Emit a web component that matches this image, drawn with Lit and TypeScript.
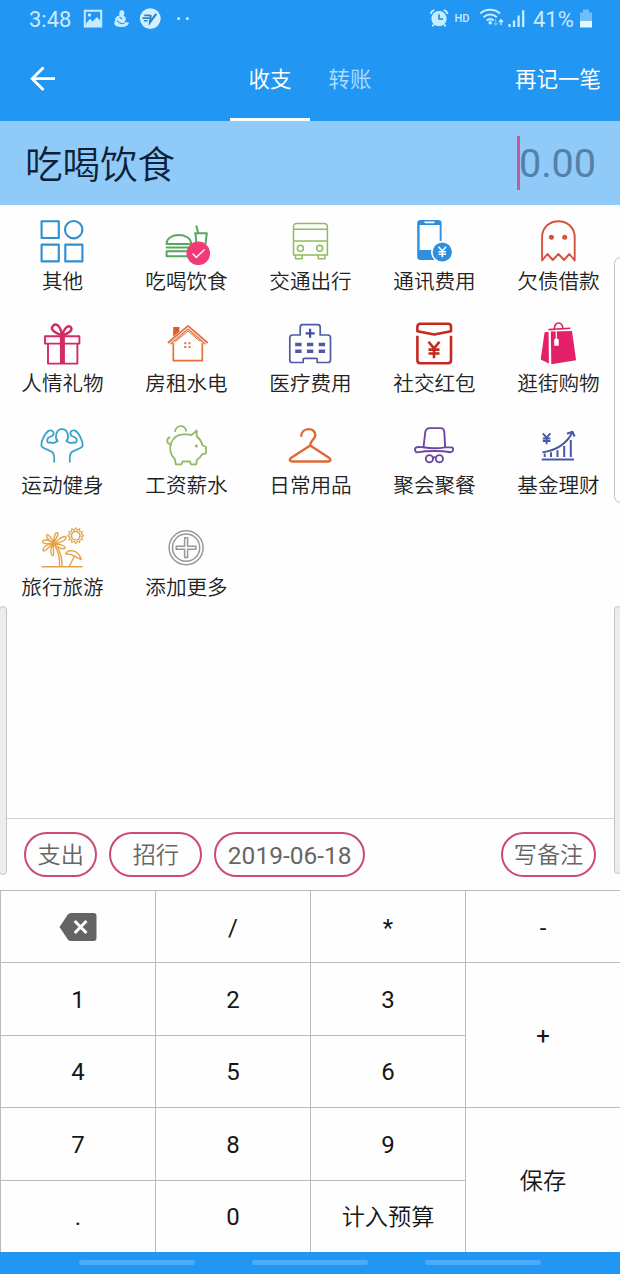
import { LitElement, html, svg, css } from "lit";
import { customElement, property, state } from "lit/decorators.js";
import { classMap } from "lit/directives/class-map.js";

const yen = (x: number, y: number, w: number, h: number) => {
  const a = w / 2;
  const b = h / 2;
  return `M${x - a} ${y - b}L${x} ${y - b * 0.2}L${x + a} ${y - b}M${x} ${y - b * 0.2}V${y + b}M${x - a} ${y - b * 0.05}H${x + a}M${x - a} ${y + b * 0.42}H${x + a}`;
};

const sun = (x: number, y: number, outer: number, inner: number, rays: number) =>
  Array.from({ length: rays * 2 }, (_, i) => {
    const r = i % 2 ? inner : outer;
    const t = (i * Math.PI) / rays;
    return `${(x + r * Math.sin(t)).toFixed(2)},${(y - r * Math.cos(t)).toFixed(2)}`;
  }).join(" ");

const ICONS: Record<string, unknown> = {
  other: svg`<g stroke="#2f8fd0" stroke-width="2.1"><path d="M3.6 4.3H20.8V21H3.6zM3.6 27.6H20.8V44.4H3.6zM27.3 27.6H44.4V44.4H27.3z"/><circle cx="35.7" cy="12.7" r="8.7"/></g>`,
  food: svg`<g stroke="#56a85f" stroke-width="2"><path d="M4.6 27C4.6 15 29 15 29.2 27zM3.8 30.4H31M4.6 34.2H26V39.2H4.6z"/><path d="M32.2 16.3H44.8L43.5 27M33.5 16.3L34.4 26M36.2 16L34.2 8.4"/></g><circle cx="36.3" cy="36.3" r="11.8" fill="#f23a78"/><path d="M30.6 36.6L34.3 40.4L42.6 32.4" stroke="#fff" stroke-width="1.4"/>`,
  bus: svg`<g stroke="#8fbd5b" stroke-width="1.5"><path d="M11 6.5H38Q41.4 6.5 41.4 10V38H7.5V10Q7.5 6.5 11 6.5zM7.5 12.3H41.4M7.5 24H41.4M9.5 38V41.8H16.2V38M32.3 38V41.8H39V38"/><circle cx="14.4" cy="31.3" r="3"/><circle cx="33.7" cy="31.3" r="3"/></g>`,
  phone: svg`<path fill="#2f8fdd" fill-rule="evenodd" d="M10.5 3H28.5Q31.6 3 31.6 6V43H10.5Q7.2 43 7.2 40V6Q7.2 3 10.5 3zM9.6 8V33H29.7V8zM14 4.4L15 6.2H24L25 4.4z"/><circle cx="32.3" cy="35" r="11.2" fill="#fff"/><circle cx="32.3" cy="35" r="9.6" fill="#2f8fdd"/><path d="${yen(32.3, 35, 7.5, 10.5)}" stroke="#fff" stroke-width="1.6"/>`,
  ghost: svg`<path d="M8.1 43.5V20.4C8.1-1.2 40.7-1.2 40.7 20.4V43.5L35.3 37L30 43L24.4 37L18.8 43L13.5 37z" stroke="#d4503f" stroke-width="1.9"/><circle cx="17.4" cy="20.3" r="2.5" fill="#d4503f"/><circle cx="30.7" cy="20.3" r="2.5" fill="#d4503f"/>`,
  gift: svg`<g stroke="#d42a63" stroke-width="1.9"><path d="M7 17.2H41.4V24.6H7zM10 24.6H39.4V44.6H10z"/><path stroke-width="2.4" d="M24 16.5C15 13 12.5 10 14.5 7.5C17.5 3 22.5 6 24 16.5C27 7 31 6 33 8.3C35 11.5 30 15 24 16.5"/><path stroke-width="5" d="M24.4 14.5V45"/></g>`,
  house: svg`<path d="M11.2 17.8V8H17.4V12.5z" fill="#e65a22"/><path d="M5.8 24L26 6.8L45.8 24" stroke="#e2703f" stroke-width="1.7"/><path d="M8.2 25.2L26 10L43.5 25.2" stroke="#e2703f" stroke-width="1.2"/><path d="M11.3 24V41.6H40.3V24" stroke="#e2703f" stroke-width="1.7"/><path d="M13.2 22.8L26 12.1L38.5 22.8" stroke="#e2703f" stroke-width="1"/><path d="M22.3 23.2h2v2h-2zM26.5 23.2h2v2h-2zM22.3 27h2v2h-2zM26.5 27h2v2h-2z" fill="#d4714a"/>`,
  hospital: svg`<path d="M14.2 16V8.2Q14.2 5.6 16.8 5.6H31.5Q34.2 5.6 34.2 8.2V16H41.8Q44.5 16 44.5 18.7V41Q44.5 43.5 42 43.5H31.2V40Q31 39.3 30 39.3H18.2Q17.2 39.3 17.2 40V43.5H6.3Q3.8 43.5 3.8 41V18.7Q3.8 16 6.5 16z" stroke="#4f5aa5" stroke-width="1.7"/><path d="M24.1 9.7V18.8M19.6 14.3H28.7" stroke="#3f4ca0" stroke-width="2.2"/><path d="M9.2 23.7h6.4v3.6h-6.4zM20.9 23.7h6.4v3.6h-6.4zM32.7 23.7h6.4v3.6h-6.4zM9.2 30.4h6.4v3.6h-6.4zM20.9 30.4h6.4v3.6h-6.4zM32.7 30.4h6.4v3.6h-6.4z" fill="#4f5aa5"/>`,
  packet: svg`<g stroke="#c4281f" stroke-width="2.6"><path d="M7.4 12.2V7.8Q7.4 4.8 10.4 4.8H38Q41 4.8 41 7.8V12.2L24.2 15.6z"/><path d="M7.4 16.8V41.2Q7.4 44.2 10.4 44.2H38Q41 44.2 41 41.2V16.8"/><path d="${yen(24, 31, 11, 16.5)}"/></g>`,
  bag: svg`<path d="M20.4 10.2C20.5 2 28.5 2 28.8 9.8M14.6 10.6L36.3 9.2" stroke="#d8215f" stroke-width="1.6"/><path d="M10.6 13.2L14.6 12.8L14.9 44.6L6.7 40.5zM16.8 12.6L38 11.9L42.1 41.3L17.3 45.2z" fill="#e5206b"/><path d="M22.3 10.4V20" stroke="#fff" stroke-width="1.2"/><path d="M20.2 20.4L22.3 18.9L24.7 20.4V26.8H20.2z" fill="#fff"/>`,
  muscle: svg`<g stroke="#3aa3cc" stroke-width="1.8"><path d="M20.2 20.8C16.4 17.5 17.6 8.1 24 8.1C30.4 8.1 31.6 17.5 27.8 20.8"/><path d="M18.5 17.8C20.5 22 14 22.5 12 21.2C9.5 23 8.5 19.5 10 17L14.5 14.7C17 11.5 15 8.8 11 9.6C6 12.5 2.3 22.5 3.7 25.6C7.5 29 13.5 29 15.2 32.2C16.8 36 16.2 38 16.2 41.5"/><path d="M29.5 17.8C27.5 22 34 22.5 36 21.2C38.5 23 39.5 19.5 38 17L33.5 14.7C31 11.5 33 8.8 37 9.6C42 12.5 45.7 22.5 44.3 25.6C40.5 29 34.5 29 32.8 32.2C31.2 36 31.8 38 31.8 41.5"/></g>`,
  pig: svg`<g stroke="#94b865" stroke-width="1.8"><path d="M29.5 14.2L34.7 9.5V15.3C38 18 39.5 20.5 40.5 24.3L44 26V32.3L40.2 33.2Q38.5 36.5 35 38.7L34.2 43.3H28.8L28 40.5H20.5L19.5 43.3H13.8L12.8 38C8.2 34 7 27 9.3 21.5C12 15 18 12.8 24 13.4Q27.5 13.2 29.5 14.2z"/><path d="M13 11C13.5 3.3 24 3.2 24.2 10.4M8.3 16.3C4.4 16.5 4 22.5 8.3 23.4"/></g><circle cx="34.4" cy="25" r="1.5" fill="#94b865"/>`,
  hanger: svg`<path d="M15.2 15.8C15 5.8 29.5 5.8 29.3 14.3C29 19 24 19 24.2 24.5L5.3 36.8C2.6 39 4.2 40.5 6.5 40.5H42C44.5 40.5 45.7 38.5 43 36.7L24.2 24.5" stroke="#df6836" stroke-width="2.4"/>`,
  hat: svg`<g stroke="#6a48a3" stroke-width="1.9"><path d="M13.4 27L15.3 11Q15.9 7.1 20 7.1H30.5Q34.2 7.1 34.3 11L35.2 27"/><path d="M13.2 26.2C10 26.2 7 25.5 5.6 26.8C4.3 28.5 5 31 7.5 31.4C17 29.5 32 29.5 40.5 31.3C43.5 31 44 27.5 42 26.4H35.2Q24 28.2 13.2 26.2z"/><circle cx="19.4" cy="37.7" r="3.6"/><circle cx="29.4" cy="37.7" r="3.6"/><path d="M22.8 36.8Q24.4 35.5 26 36.8"/></g>`,
  fund: svg`<g stroke="#4659a5"><path stroke-width="1.9" d="M7.7 38.5H40M8.3 31.4C21 29.5 32 24 38.3 11.5"/><path stroke-width="2.1" d="M33 12.8L38.4 10.8L40.6 15.5"/><path stroke-width="2" d="M10.7 32.6V36M17 31.3V36M23.5 29.3V36M30.2 25V36M36.8 19V36"/><path stroke-width="1.9" d="${yen(12.6, 17.8, 7.6, 10.8)}"/></g>`,
  travel: svg`<g stroke="#e3a447" stroke-width="1.4"><circle cx="37.7" cy="12.7" r="4.2"/><polygon points="${sun(37.7, 12.7, 8, 5.7, 12)}" stroke-width="1.1"/><path d="M3.7 43.7H44.5M17 23C20.5 29 22 36 21.5 43.5M19 23C22.8 30 24.4 37 24 43.5"/><path d="M16 21C10 15 4 17 4.5 19C6 22 12 20 16 21C9 20 4 25 5.5 28C8 29 11 22 16 21C11 25 13 33 15 32.5C17 31 14 25 16 21C18 24 25 27 27 25C27 22 20 21 16 21C22 20 29 17 28 14C25 12 20 17 16 21C16 16 22 12 19.5 9.7C16.5 9 15.5 16 16 21C15 17 10 10 8.5 12C7.5 15 12 18 16 21"/><path d="M27.5 31C30 26 40 26 43.3 36.5L36.5 33.3L33 31.4L27.5 31M36.8 32.2L31.2 43.5"/></g><circle cx="16" cy="21" r="2.3" fill="#eba034"/>`,
  add: svg`<g stroke="#98989b" stroke-width="1.5"><circle cx="24.1" cy="24.7" r="17"/><circle cx="24.1" cy="24.7" r="13.6"/><path d="M22.6 14.8H25.6V23.2H34V26.2H25.6V34.6H22.6V26.2H14.2V23.2H22.6z"/></g>`,
};

const CATEGORIES = [
  ["other", "其他"], ["food", "吃喝饮食"], ["bus", "交通出行"], ["phone", "通讯费用"], ["ghost", "欠债借款"],
  ["gift", "人情礼物"], ["house", "房租水电"], ["hospital", "医疗费用"], ["packet", "社交红包"], ["bag", "逛街购物"],
  ["muscle", "运动健身"], ["pig", "工资薪水"], ["hanger", "日常用品"], ["hat", "聚会聚餐"], ["fund", "基金理财"],
  ["travel", "旅行旅游"], ["add", "添加更多"],
];

const KEYS = ["del", "/", "*", "-", "1", "2", "3", "+", "4", "5", "6", "7", "8", "9", "保存", ".", "0", "计入预算"];

@customElement("status-bar")
class StatusBar extends LitElement {
  static styles = css`
    :host { display: flex; height: 38px; padding: 0 27px 0 29px; justify-content: space-between; color: #cdeaff; font: 22px/38px Roboto, sans-serif; }
    .side { display: flex; align-items: center; }
    .time { width: 53px; padding-top: 2px; }
    .percent { width: 47px; padding-top: 2px; }
    svg { display: block; fill: none; }
  `;
  render() {
    return html`
      <div class="side">
        <span class="time">3:48</span>
        <svg width="112" height="38" viewBox="82 0 112 38">
          <path d="M84.8 10.8H101.2V26.6H84.8z" stroke="#c6edff" stroke-width="2"/>
          <path d="M86 23.5L90 18.7L92.5 21.5L97 17L100.5 21V26H86z" fill="#c6edff"/><circle cx="89.5" cy="15" r="1.7" fill="#c6edff"/>
          <path d="M119.6 15.5C118.6 12.5 120 9.8 122.4 10.3C125 11 124.6 14 123.6 15.8C127 17.5 126 20.5 124.5 22L128.9 22.6C128.5 26.2 124.5 27.3 120.5 27.1C114.5 27 113 23.5 115.2 20.8C114.6 18 117 15.8 119.6 15.5z" fill="#c6edff"/>
          <path d="M117 20.5C119.5 24 122 24.4 125 22.6M119.5 17L122 19" stroke="#2196f3" stroke-width="1.1"/>
          <circle cx="150.3" cy="18.6" r="10.4" fill="#d3f0ff"/>
          <path d="M144.5 14.6H150.3L149.7 16.2H144zM142.8 17.3H149.4L148.9 18.9H142.3zM144 20H148L147.4 21.6H143.5z" fill="#2a84c8"/><path d="M150.6 14.8L150 22.2L156.2 13.8" stroke="#2a84c8" stroke-width="2.2"/>
          <circle cx="178.6" cy="18.5" r="1.6" fill="#c6edff"/><circle cx="187.3" cy="18.5" r="1.6" fill="#c6edff"/>
        </svg>
      </div>
      <div class="side">
        <svg width="104" height="38" viewBox="430 0 104 38">
          <circle cx="440" cy="18.7" r="7.6" fill="#c6edff"/><path d="M440 14.2V19H444" stroke="#2689d8" stroke-width="1.6"/>
          <path d="M431.7 14Q432.3 11 435.3 10.2M444.7 10.2Q448 11 448.4 14M435.3 24L433.3 26.3M444.7 24L446.8 26.3" stroke="#c6edff" stroke-width="1.8"/>
          <text x="455.5" y="22.3" font-size="11" font-weight="500" fill="#cdeaff">HD</text>
          <g stroke="#c6edff" stroke-width="2"><path d="M481.2 13.5C486.5 8.6 495.5 8.6 501 13.5M484.5 17.2C488.5 13.7 494 13.7 497.8 17.2M487.7 20.5C490 18.7 492.5 18.7 494.8 20.5"/></g>
          <circle cx="491.2" cy="22.8" r="1.7" fill="#c6edff"/>
          <path d="M496.7 19V25M494.8 23.2L496.7 25.2L498.6 23.2" stroke="#70c4f5" stroke-width="1.2"/><path d="M502 25V20M500 22L502 19.8L504 22" stroke="#d8f4ff" stroke-width="1.3"/>
          <path d="M510.5 24V27M515 20.5V27M519.6 15.5V27M524.2 10.3V27" stroke="#c6edff" stroke-width="2.3"/>
        </svg>
        <span class="percent">41%</span>
        <svg width="13" height="38" viewBox="580 0 13 38"><path d="M580 12.5H583V9.5H589V12.5H592V21H580z" fill="#70bdf8"/><path d="M580 21H592V27.5H580z" fill="#e2f7ff"/></svg>
      </div>`;
  }
}

@customElement("category-item")
class CategoryItem extends LitElement {
  @property() icon = "";
  @property() label = "";
  static styles = css`
    :host { display: flex; flex-direction: column; align-items: center; height: 102px; }
    svg { display: block; width: 48px; height: 48px; fill: none; stroke-linejoin: round; }
    .label { font-size: 20.6px; line-height: 30px; margin-top: 2px; padding-left: 1px; color: #222; white-space: nowrap; font-weight: 350; }
  `;
  render() {
    return html`<svg viewBox="0 0 48 48">${ICONS[this.icon]}</svg><span class="label">${this.label}</span>`;
  }
}

@customElement("key-pad")
class KeyPad extends LitElement {
  static styles = css`
    :host { display: grid; grid-template-columns: repeat(4, 155px); grid-template-rows: repeat(5, 1fr); height: 362px; background: #fefefe; }
    .key { display: flex; align-items: center; justify-content: center; box-sizing: border-box; border: 0 solid #bcbcbf; border-width: 1px 0 0 1px; padding-top: 2px; color: #161616; font: 24px/32px Roboto, "Noto Sans CJK SC", sans-serif; }
    .tall { grid-row: span 2; }
    .text { font-size: 23.2px; font-weight: 350; }
    svg { display: block; margin-top: -2px; }
  `;
  render() {
    return KEYS.map((k) => html`<div class=${classMap({ key: true, tall: k === "+" || k === "保存", text: k.length > 1 && k !== "del" })}>${k === "del"
      ? html`<svg width="38" height="28" viewBox="0 0 38 28"><path fill="#646467" d="M12 0H34.5Q37.5 0 37.5 3V25Q37.5 28 34.5 28H12Q10 28 8.8 26.4L.5 14L8.8 1.6Q10 0 12 0z"/><path d="M15.7 8L27.5 20M27.5 8L15.7 20" stroke="#fff" stroke-width="3"/></svg>`
      : k}</div>`);
  }
}

@customElement("app-root")
class AppRoot extends LitElement {
  @state() private selected = "吃喝饮食";
  static styles = css`
    :host { display: flex; flex-direction: column; position: relative; width: 620px; height: 1274px; overflow: hidden; background: #fefefe; font-family: Roboto, "Noto Sans CJK SC", sans-serif; }
    .header { background: #2196f3; height: 121px; }
    .nav { display: grid; grid-template-columns: 230px 80px 80px 1fr; height: 83px; color: #fff; font-size: 21.5px; line-height: 78px; }
    .back { padding: 27px 0 0 29px; }
    .back svg { display: block; fill: none; }
    .tab { text-align: center; color: #a9dbff; box-sizing: border-box; height: 83px; padding-top: 3px; }
    .tab.active { color: #fff; border-bottom: 3px solid #f4fcff; padding-top: 3px; line-height: 77px; }
    .tab, .tab.active, .again { line-height: 78px; }
    .tab.active { padding-top: 2px; line-height: 80px; overflow: visible; }
    .tab { line-height: 80px; padding-top: 2px; }
    .again { text-align: right; padding: 3px 19px 0 0; }
    .amount { display: flex; justify-content: space-between; align-items: center; box-sizing: border-box; height: 84px; padding: 0 24px 0 25px; background: #90caf9; color: #0d2238; font-size: 37.5px; }
    .title { padding-bottom: 3px; font-weight: 350; }
    .value { display: flex; align-items: center; font-size: 39.5px; line-height: 54px; color: #5480a6; }
    .digits { padding-top: 2px; margin-left: -1px; }
    .caret { width: 3px; height: 54px; background: #c8589b; }
    .grid { display: grid; grid-template-columns: repeat(5, 124px); align-content: start; height: 601px; padding-top: 12px; }
    .options { display: flex; gap: 12px; box-sizing: border-box; height: 72px; border-top: 1px solid #d5d2d6; padding: 13px 24px 0; }
    .pill { box-sizing: border-box; height: 45px; border: 2px solid #cc4a74; border-radius: 23px; padding: 0 11.5px; text-align: center; font-size: 23.2px; line-height: 43px; color: #666; white-space: nowrap; font-weight: 350; }
    .account { padding: 0 21.3px; }
    .date { font-size: 24.5px; padding: 0 11.5px; font-weight: 400; }
    .note { margin-left: auto; padding: 0 10.7px; }
    .bottom { display: flex; justify-content: center; gap: 57px; height: 22px; background: #2196f3; }
    .bar { width: 116px; height: 5px; margin-top: 8px; border-radius: 3px; background: #4aacff; }
    .edge { position: absolute; box-sizing: border-box; border: 1.5px solid #c4c4c7; background: #ededef; }
    .edge.upper { right: -7px; top: 257px; width: 13px; height: 246px; border-radius: 7px; background: #fefefe; }
    .edge.left { left: -1px; top: 606px; width: 8px; height: 269px; border-radius: 4px; }
    .edge.right { right: -1px; top: 606px; width: 7px; height: 268px; border-radius: 4px; }
  `;
  render() {
    return html`
      <div class="header">
        <status-bar></status-bar>
        <div class="nav">
          <div class="back"><svg width="28" height="28" viewBox="0 0 28 28"><path d="M26 13.7H4M14.5 2.5L3.2 13.7L14.5 25" stroke="#fff" stroke-width="2.8"/></svg></div>
          <div class="tab active">收支</div>
          <div class="tab">转账</div>
          <div class="again">再记一笔</div>
        </div>
      </div>
      <div class="amount"><span class="title">${this.selected}</span><span class="value"><span class="caret"></span><span class="digits">0.00</span></span></div>
      <div class="grid">${CATEGORIES.map(([icon, label]) => html`<category-item .icon=${icon} .label=${label}></category-item>`)}</div>
      <div class="options">
        <div class="pill">支出</div>
        <div class="pill account">招行</div>
        <div class="pill date">2019-06-18</div>
        <div class="pill note">写备注</div>
      </div>
      <key-pad></key-pad>
      <div class="bottom"><div class="bar"></div><div class="bar"></div><div class="bar"></div></div>
      <div class="edge upper"></div>
      <div class="edge left"></div>
      <div class="edge right"></div>`;
  }
}
